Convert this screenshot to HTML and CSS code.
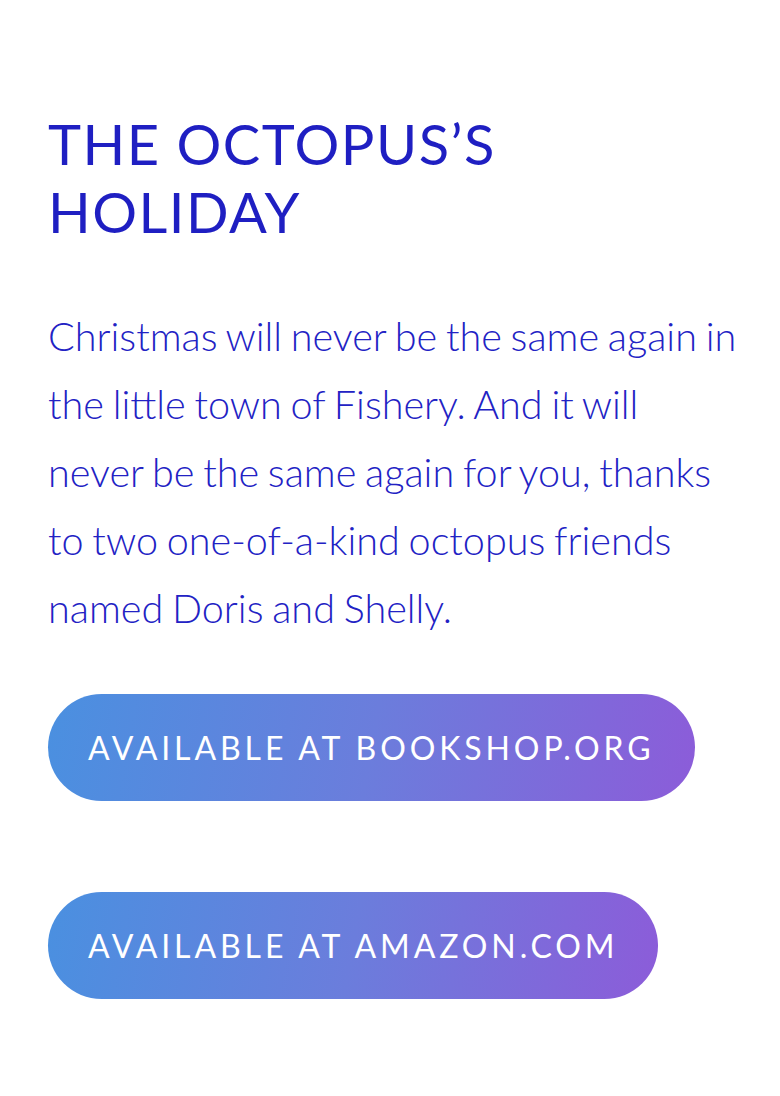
FILE: index.html
```html
<!DOCTYPE html>
<html lang="en">
<head>
<meta charset="utf-8">
<title>The Octopus's Holiday</title>
<link rel="stylesheet" href="styles.css">
</head>
<body>
<main class="book">
  <h1 class="book-title">The Octopus’s Holiday</h1>
  <p class="book-desc">Christmas will never be the same again in the little town of Fishery. And it will never be the same again for you, thanks to two one-of-a-kind octopus friends named Doris and Shelly.</p>
  <div class="actions">
    <a class="btn" href="#">Available at Bookshop.org</a>
    <a class="btn" href="#">Available at Amazon.com</a>
  </div>
</main>
</body>
</html>
```

FILE: styles.css
```css
html, body {
  margin: 0;
  padding: 0;
  background: #ffffff;
}
body {
  font-family: Lato, "Open Sans", sans-serif;
}
.book {
  padding: 110px 41px 80px 48px;
}
.book-title {
  margin: 0;
  max-width: 540px;
  font-size: 56px;
  font-weight: 400;
  line-height: 68px;
  letter-spacing: 1.5px;
  text-transform: uppercase;
  color: #1f1fc2;
}
.book-desc {
  margin: 56px 0 0;
  font-size: 39.6px;
  font-weight: 300;
  line-height: 68px;
  word-spacing: -2px;
  color: #2222c4;
}
.actions {
  margin-top: 52px;
  display: flex;
  flex-direction: column;
  align-items: flex-start;
  gap: 91px;
}
.btn {
  display: inline-flex;
  align-items: center;
  height: 107px;
  padding: 0 40px;
  border-radius: 54px;
  background: linear-gradient(100deg, #4a90e0 0%, #6b7ddc 50%, #8c5cd9 100%);
  color: #ffffff;
  text-decoration: none;
  text-transform: uppercase;
  font-size: 32px;
  font-weight: 400;
  letter-spacing: 3.9px;
}
```
